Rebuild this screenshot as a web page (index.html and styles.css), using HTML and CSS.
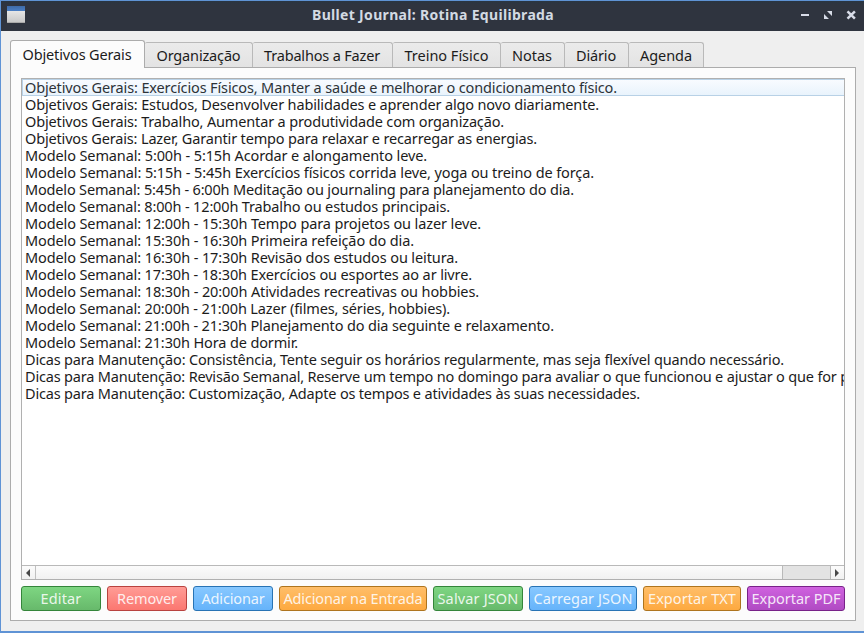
FILE: index.html
```html
<!DOCTYPE html>
<html lang="pt-BR">
<head>
<meta charset="utf-8">
<title>Bullet Journal: Rotina Equilibrada</title>
<link rel="stylesheet" href="styles.css">
</head>
<body>
<div class="window">
  <header class="titlebar">
    <span class="app-icon"></span>
    <h1 class="title"><span data-w="242">Bullet Journal: Rotina Equilibrada</span></h1>
    <svg class="controls" width="58" height="12" viewBox="0 0 58 12">
      <path fill="#d8dce8" d="M0 5h8v2H0zM26 2h5v5zM23 5l5 5h-5z"/>
      <path stroke="#d8dce8" stroke-width="2.5" fill="none" d="M46.5 2.3l7.4 7.4M53.9 2.3l-7.4 7.4"/>
    </svg>
  </header>
  <main class="content">
    <nav class="tabs">
      <a class="tab active"><span data-w="109">Objetivos Gerais</span></a>
      <a class="tab t2"><span data-w="84">Organização</span></a>
      <a class="tab t3"><span data-w="116">Trabalhos a Fazer</span></a>
      <a class="tab t4"><span data-w="84">Treino Físico</span></a>
      <a class="tab t5"><span data-w="40">Notas</span></a>
      <a class="tab t6"><span data-w="40">Diário</span></a>
      <a class="tab t7"><span data-w="52">Agenda</span></a>
    </nav>
    <section class="panel">
      <div class="listbox">
        <ul class="list">
          <li class="current"><span data-w="592">Objetivos Gerais: Exercícios Físicos, Manter a saúde e melhorar o condicionamento físico.</span></li>
          <li><span data-w="574">Objetivos Gerais: Estudos, Desenvolver habilidades e aprender algo novo diariamente.</span></li>
          <li><span data-w="479">Objetivos Gerais: Trabalho, Aumentar a produtividade com organização.</span></li>
          <li><span data-w="512">Objetivos Gerais: Lazer, Garantir tempo para relaxar e recarregar as energias.</span></li>
          <li><span data-w="402">Modelo Semanal: 5:00h - 5:15h Acordar e alongamento leve.</span></li>
          <li><span data-w="569">Modelo Semanal: 5:15h - 5:45h Exercícios físicos corrida leve, yoga ou treino de força.</span></li>
          <li><span data-w="549">Modelo Semanal: 5:45h - 6:00h Meditação ou journaling para planejamento do dia.</span></li>
          <li><span data-w="425">Modelo Semanal: 8:00h - 12:00h Trabalho ou estudos principais.</span></li>
          <li><span data-w="456">Modelo Semanal: 12:00h - 15:30h Tempo para projetos ou lazer leve.</span></li>
          <li><span data-w="389">Modelo Semanal: 15:30h - 16:30h Primeira refeição do dia.</span></li>
          <li><span data-w="433">Modelo Semanal: 16:30h - 17:30h Revisão dos estudos ou leitura.</span></li>
          <li><span data-w="447">Modelo Semanal: 17:30h - 18:30h Exercícios ou esportes ao ar livre.</span></li>
          <li><span data-w="454">Modelo Semanal: 18:30h - 20:00h Atividades recreativas ou hobbies.</span></li>
          <li><span data-w="425">Modelo Semanal: 20:00h - 21:00h Lazer (filmes, séries, hobbies).</span></li>
          <li><span data-w="529">Modelo Semanal: 21:00h - 21:30h Planejamento do dia seguinte e relaxamento.</span></li>
          <li><span data-w="273">Modelo Semanal: 21:30h Hora de dormir.</span></li>
          <li><span data-w="759">Dicas para Manutenção: Consistência, Tente seguir os horários regularmente, mas seja flexível quando necessário.</span></li>
          <li><span data-w="872">Dicas para Manutenção: Revisão Semanal, Reserve um tempo no domingo para avaliar o que funcionou e ajustar o que for possível.</span></li>
          <li><span data-w="615">Dicas para Manutenção: Customização, Adapte os tempos e atividades às suas necessidades.</span></li>
        </ul>
        <div class="scrollbar">
          <span class="arrow left"></span>
          <span class="track"><span class="thumb"></span></span>
          <span class="arrow right"></span>
        </div>
      </div>
      <div class="buttons">
        <button class="btn green w80"><span data-w="41">Editar</span></button>
        <button class="btn red w80"><span data-w="60">Remover</span></button>
        <button class="btn blue w80"><span data-w="63">Adicionar</span></button>
        <button class="btn orange w148"><span data-w="139">Adicionar na Entrada</span></button>
        <button class="btn green w90"><span data-w="81">Salvar JSON</span></button>
        <button class="btn blue w108"><span data-w="99">Carregar JSON</span></button>
        <button class="btn orange w98"><span data-w="88">Exportar TXT</span></button>
        <button class="btn purple w98"><span data-w="89">Exportar PDF</span></button>
      </div>
    </section>
  </main>
</div>
<script src="script.js"></script>
</body>
</html>
```

FILE: styles.css
```css
* { box-sizing: border-box; }
body {
  margin: 0;
  font: 14.5px/17px "Noto Sans", sans-serif;
  color: #1c1c1c;
}
.window {
  height: 633px;
  display: flex;
  flex-direction: column;
  overflow: hidden;
  background: #efefef;
  border: solid #5f93d5;
  border-width: 1px 0 2px 1px;
}
.titlebar {
  height: 30px;
  flex: none;
  display: grid;
  grid-template-columns: 64px 1fr 64px;
  align-items: center;
  background: linear-gradient(#293542, #2f343f 4px);
}
.app-icon {
  width: 18px;
  height: 17px;
  margin: 0 0 3px 6px;
  background: linear-gradient(#3e6ba8, #4b7fc4 5px, #e6e6e6 5px, #c9c9c9);
  border-bottom: 1px solid #aaa;
}
.title {
  margin: 0 0 2px 1px;
  text-align: center;
  font-size: 14px;
  line-height: 20px;
  font-weight: 700;
  color: #d3dae3;
}
.controls { margin: 0 0 2px 1px; }
.content { padding: 9px 8px 0 9px; flex: 1; }
.tabs {
  display: flex;
  align-items: flex-end;
  height: 27px;
  position: relative;
}
.tab {
  height: 25px;
  padding-top: 1px;
  display: flex;
  justify-content: center;
  align-items: center;
  border: 1px solid #b9b9b9;
  border-left-width: 0;
  border-bottom: 0;
  border-radius: 2px 3px 0 0;
  background: linear-gradient(#ebebeb, #e3e3e3);
}
.tab.active {
  width: 135px;
  height: 28px;
  padding: 0 1px 0 0;
  margin-bottom: -1px;
  border-left-width: 1px;
  border-color: #acacac;
  border-radius: 3px 3px 0 0;
  background: #fcfcfc;
}
.t2 { width: 108px; }
.t3 { width: 140px; padding-right: 1px; }
.t4 { width: 108px; }
.t5 { width: 64px; padding-right: 1px; }
.t6 { width: 64px; padding-right: 1px; }
.t7 { width: 75px; }
.panel {
  width: 846px;
  height: 554px;
  padding: 10px;
  border: 1px solid #acacac;
  background: #fcfcfc;
}
.listbox {
  width: 824px;
  height: 502px;
  display: flex;
  flex-direction: column;
  border: 1px solid #b0b0b0;
  background: #fff;
}
.list {
  flex: 1;
  margin: 0;
  padding: 0;
  list-style: none;
  overflow: hidden;
}
.list li { height: 17px; padding-left: 3px; white-space: nowrap; }
.list .current {
  padding-left: 2px;
  border: 1px solid #b8d1e6;
  border-right: 0;
  line-height: 15px;
  color: #2d3338;
  background: linear-gradient(#f8fbff, #e9f3fc);
}
.scrollbar {
  height: 14px;
  flex: none;
  display: flex;
  border-top: 1px solid #b9b9b9;
  background: linear-gradient(#fbfbfb, #f1f1f1);
}
.arrow { width: 14px; padding-right: 2px; display: flex; align-items: center; justify-content: center; }
.arrow::before { content: ""; border: 4px solid transparent; }
.arrow.left { border-right: 1px solid #c0c0c0; }
.arrow.left::before { border-left-width: 0; border-right-color: #484848; }
.arrow.right { width: 13px; }
.arrow.right::before { border-right-width: 0; border-left-color: #484848; }
.track { flex: 1; display: flex; justify-content: flex-end; }
.thumb { width: 49px; background: #e3e3e3; border: solid #b9b9b9; border-width: 0 1px; }
.buttons { display: flex; gap: 6px; margin-top: 6px; }
.btn {
  height: 25px;
  padding: 0 0 1px;
  display: flex;
  justify-content: center;
  align-items: center;
  border: 1px solid;
  border-radius: 3px;
  font: 14.5px/20px "Noto Sans", sans-serif;
  color: rgba(255, 255, 255, 0.87);
}
.w80 { width: 80px; }
.w90 { width: 90px; }
.w98 { width: 98px; }
.w108 { width: 108px; }
.w148 { width: 148px; }
.green { border-color: #34853a; background: linear-gradient(#7ed682, #67b96b); }
.red { border-color: #b8423f; background: linear-gradient(#ff9c96, #fb7770); }
.blue { border-color: #2873b4; background: linear-gradient(#88c8ff, #65b3fa); }
.orange { border-color: #ae741e; background: linear-gradient(#ffbe69, #fda940); }
.purple { border-color: #782288; background: linear-gradient(#cf62df, #b04bc3); }
[data-w] { display: inline-block; white-space: nowrap; }
```

FILE: script.js
```js
// Spread each label over its nominal width by adjusting letter spacing.
document.querySelectorAll("[data-w]").forEach(function (el) {
  var width = Number(el.dataset.w);
  var gap = (width - el.getBoundingClientRect().width) / el.textContent.length;
  el.style.letterSpacing = gap + "px";
});
```
